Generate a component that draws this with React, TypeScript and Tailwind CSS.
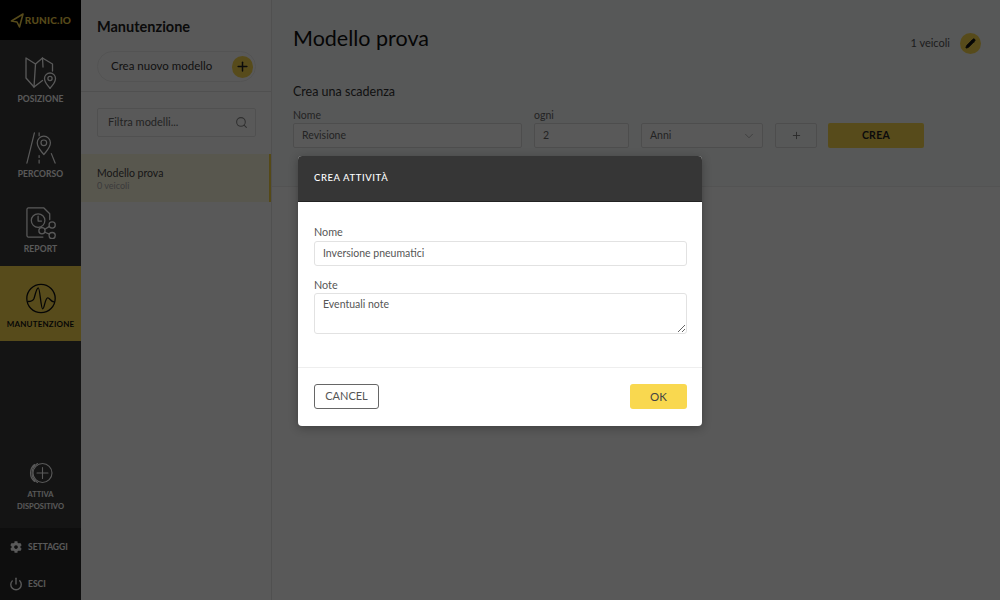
import { Plus, Search, ChevronDown, Pencil, Power } from 'lucide-react'
import { FaCog } from 'react-icons/fa'

function MapIcon() {
  return (
    <svg width="32" height="32" viewBox="0 0 32 32" fill="none" stroke="currentColor" strokeWidth="1.3" strokeLinejoin="round" strokeLinecap="round">
      <path d="M17.5 23.5 L9 30 L1 21 L1 1 L10.5 7 L17.5 1 L27.5 7 L27.5 14" />
      <path d="M10.5 7 L9 30 M17.5 1 L18 10" />
      <path d="M25 31.5 C22.5 28 19.5 25.5 19.5 21.5 A5.5 5.5 0 0 1 30.5 21.5 C30.5 25.5 27.5 28 25 31.5 Z" />
      <circle cx="25" cy="21.5" r="2.1" />
    </svg>
  )
}

function RouteIcon() {
  return (
    <svg width="32" height="32" viewBox="0 0 32 34" fill="none" stroke="currentColor" strokeWidth="1.3" strokeLinejoin="round" strokeLinecap="round">
      <path d="M9 1 L1 33 M27 23 L31 33" />
      <path d="M14 1 L14 4 M14 25 L14 27 M14 30 L14 33" />
      <path d="M19 24 C15.5 19.5 12 16.5 12 11.5 A7 7 0 0 1 26 11.5 C26 16.5 22.5 19.5 19 24 Z" />
      <circle cx="19" cy="11.5" r="3" />
    </svg>
  )
}

function ReportIcon() {
  return (
    <svg width="32" height="32" viewBox="0 0 32 33" fill="none" stroke="currentColor" strokeWidth="1.3" strokeLinejoin="round" strokeLinecap="round">
      <path d="M18 31 L3 31 A1.5 1.5 0 0 1 1.5 29.5 L1.5 2.5 A1.5 1.5 0 0 1 3 1 L19 1 L25 7 L25 13" />
      <circle cx="13" cy="14" r="7" />
      <path d="M13 9.5 L13 14.5 L16.5 14.5" />
      <circle cx="17" cy="24.5" r="3.2" />
      <circle cx="27.5" cy="18.5" r="3.2" />
      <circle cx="27.5" cy="29.5" r="3.2" />
      <path d="M20 23 L24.7 20 M20 26 L24.7 28" />
    </svg>
  )
}

function PulseIcon() {
  return (
    <svg width="30" height="31" viewBox="0 0 30 31" fill="none" stroke="currentColor" strokeWidth="1.3" strokeLinejoin="round" strokeLinecap="round">
      <circle cx="15" cy="15.5" r="14.2" />
      <path d="M2 18.5 C5 18.5 7 18 8 15.5 C9.5 11 10.5 4.8 12.3 4.8 C14 4.8 14.8 25.8 16.7 25.8 C18.5 25.8 19 14.8 21.7 14.8 C24 14.8 24.5 18.8 28 18.8" />
    </svg>
  )
}

function ActivateIcon() {
  return (
    <svg width="24" height="22" viewBox="0 0 24 22" fill="none" stroke="currentColor" strokeWidth="1.1" strokeLinecap="round">
      <circle cx="13.5" cy="11" r="9.5" />
      <path d="M13.5 5.5 L13.5 16.5 M8 11 L19 11" />
      <path d="M5.5 2.5 A11 11 0 0 0 5.5 19.5 M8.5 1.5 A11 11 0 0 0 8.5 20.5" />
    </svg>
  )
}

function LogoIcon() {
  return (
    <svg width="14" height="15" viewBox="0 0 14 15" fill="none" stroke="#f6d44c" strokeWidth="1.6" strokeLinejoin="round">
      <path d="M13 1 L1.5 8 L7 9 L9.5 14 Z" />
    </svg>
  )
}

function NavItem({ icon, label, active }: { icon: React.ReactNode; label: string; active?: boolean }) {
  return (
    <div className={`flex h-[75px] flex-col items-center justify-end ${active ? 'bg-[#f9d84f] pb-[11px] text-[#111]' : 'pb-[10px] text-white'}`}>
      {icon}
      <span className={`mt-[5px] font-bold leading-[11px] ${active ? 'text-[8px] tracking-[0.2px]' : 'text-[8.5px] tracking-[0.1px]'}`}>{label}</span>
    </div>
  )
}

export default function App() {
  return (
    <div className="relative flex h-[600px] w-[1000px] overflow-hidden bg-white font-['Lato',sans-serif] text-[#333]">
      <aside className="flex w-[81px] shrink-0 flex-col bg-[#3a3a3a]">
        <div className="flex h-10 items-center justify-center gap-[1px] bg-black">
          <LogoIcon />
          <span className="text-[10px] font-black tracking-[0.2px] text-[#f6d44c]">RUNIC.IO</span>
        </div>
        <NavItem icon={<MapIcon />} label="POSIZIONE" />
        <NavItem icon={<RouteIcon />} label="PERCORSO" />
        <NavItem icon={<ReportIcon />} label="REPORT" />
        <div className="h-px" />
        <NavItem icon={<PulseIcon />} label="MANUTENZIONE" active />
        <div className="flex-1" />
        <div className="flex h-[66px] flex-col items-center text-white">
          <ActivateIcon />
          <span className="mt-[5px] text-center text-[7.5px] font-bold leading-[12px]">ATTIVA<br />DISPOSITIVO</span>
        </div>
        <div className="bg-[#2a2a2a] text-white">
          <div className="flex h-9 items-center gap-[6px] pl-[10px] pt-[2px]">
            <FaCog size={12} />
            <span className="text-[8.5px] font-bold">SETTAGGI</span>
          </div>
          <div className="flex h-9 items-center gap-[5px] pl-[9px] pt-[4px]">
            <Power size={14} strokeWidth={2.4} />
            <span className="text-[8.5px] font-bold">ESCI</span>
          </div>
        </div>
      </aside>

      <section className="w-[191px] shrink-0 border-r border-[#e6e6e6] bg-white">
        <div className="h-[92px] border-b border-[#e6e6e6] pl-[16px] pr-[15px] pt-[18px]">
          <h2 className="text-[14.5px] font-bold leading-[18px] text-[#222]">Manutenzione</h2>
          <div className="mt-[15px] flex h-[31px] items-center justify-between rounded-full border border-[#eeeeee] pl-[13px] pr-[2px]">
            <span className="pb-[1px] text-[11.5px]">Crea nuovo modello</span>
            <span className="flex h-[22px] w-[21px] items-center justify-center rounded-full bg-[#f9d84f] text-[#222]">
              <Plus size={15} strokeWidth={2.4} />
            </span>
          </div>
        </div>
        <div className="pl-4 pr-[15px] pt-4">
          <div className="flex h-[29px] items-center justify-between rounded-[2px] border border-[#e6e6e6] pl-[10px] pr-[7px]">
            <span className="text-[11px] text-[#666]">Filtra modelli...</span>
            <Search size={13} className="text-[#888]" />
          </div>
        </div>
        <div className="mt-[17px] flex h-[48px] flex-col justify-center border-r-2 border-[#f3d044] bg-[#fdf8e0] pl-[16px] pt-[1px]">
          <span className="text-[10.5px] leading-[14px] text-[#444]">Modello prova</span>
          <span className="text-[9px] leading-[12px] text-[#aaa]">0 veicoli</span>
        </div>
      </section>

      <main className="flex-1 bg-white">
        <div className="h-[187px] border-b border-[#eeeeee] bg-[#f9fbfc] pl-[21px] pr-[19px]">
          <div className="flex h-[78px] items-center justify-between pb-[2px]">
            <h1 className="text-[21.5px] font-normal leading-[24px] text-[#111]">Modello prova</h1>
            <div className="flex items-center gap-[10px] pt-[10px]">
              <span className="pt-[1px] text-[11px] text-[#555]">1 veicoli</span>
              <span className="flex h-[21px] w-[21px] items-center justify-center rounded-full bg-[#f9d84f] text-[#111]">
                <Pencil size={11} fill="currentColor" />
              </span>
            </div>
          </div>
          <p className="mt-[6px] text-[12.5px] leading-[16px] text-[#333]">Crea una scadenza</p>
          <div className="mt-[9px] flex items-end">
            <label className="block w-[229px]">
              <span className="block text-[10.5px] leading-[13px] text-[#666]">Nome</span>
              <span className="mt-[1px] flex h-[25px] items-center rounded-[2px] border border-[#dddddd] bg-white pl-[8px] text-[10.5px] text-[#666]">Revisione</span>
            </label>
            <label className="ml-[12px] block w-[95px]">
              <span className="block text-[10.5px] leading-[13px] text-[#666]">ogni</span>
              <span className="mt-[1px] flex h-[25px] items-center rounded-[2px] border border-[#dddddd] bg-white pl-[8px] text-[10.5px] text-[#666]">2</span>
            </label>
            <div className="ml-[12px] flex h-[25px] w-[122px] items-center justify-between rounded-[2px] border border-[#dddddd] bg-white pl-[8px] pr-[6px] text-[10.5px] text-[#666]">
              Anni
              <ChevronDown size={14} strokeWidth={1.2} className="text-[#999]" />
            </div>
            <div className="ml-[12px] flex h-[25px] w-[42px] items-center justify-center rounded-[2px] border border-[#dddddd] text-[#777]">
              <Plus size={11} />
            </div>
            <div className="ml-[11px] flex h-[25px] w-[96px] items-center justify-center rounded-[2px] bg-[#f9d84f] text-[10.5px] font-bold tracking-[0.3px] text-[#222]">CREA</div>
          </div>
        </div>
      </main>

      {/* overlay + modale */}
      <div className="absolute inset-0 bg-black/65" />
      <div className="absolute left-[298px] top-[156px] w-[404px] overflow-hidden rounded-[4px] bg-white shadow-[0_2px_10px_rgba(0,0,0,0.3)]">
        <div className="flex h-[45px] items-center bg-[#363636] pl-4">
          <h3 className="text-[9.5px] font-medium tracking-[0.6px] text-white">CREA ATTIVITÀ</h3>
        </div>
        <div className="border-t border-[#222] pl-4 pr-[15px] pt-[23px]">
          <div className="text-[10.8px] leading-[14px] text-[#555]">Nome</div>
          <div className="mt-[2px] flex h-[25px] items-center rounded-[3px] border border-[#e2e2e2] pl-2 text-[10.5px] text-[#555]">Inversione pneumatici</div>
          <div className="mt-[12px] text-[10.8px] leading-[14px] text-[#555]">Note</div>
          <textarea
            readOnly
            value="Eventuali note"
            className="mt-[1px] block h-[41px] w-full rounded-[3px] border border-[#e2e2e2] px-2 py-[3px] text-[10.5px] text-[#555] outline-none"
          />
        </div>
        <div className="mt-[33px] flex h-[59px] items-center justify-between border-t border-[#eeeeee] pb-[1px] pl-4 pr-[15px]">
          <button className="flex h-[25px] w-[65px] items-center justify-center rounded-[3px] border border-[#666] text-[11px] text-[#555]">CANCEL</button>
          <button className="flex h-[25px] w-[57px] items-center justify-center rounded-[3px] bg-[#f9d84f] text-[11.5px] text-[#444]">OK</button>
        </div>
      </div>
    </div>
  )
}
